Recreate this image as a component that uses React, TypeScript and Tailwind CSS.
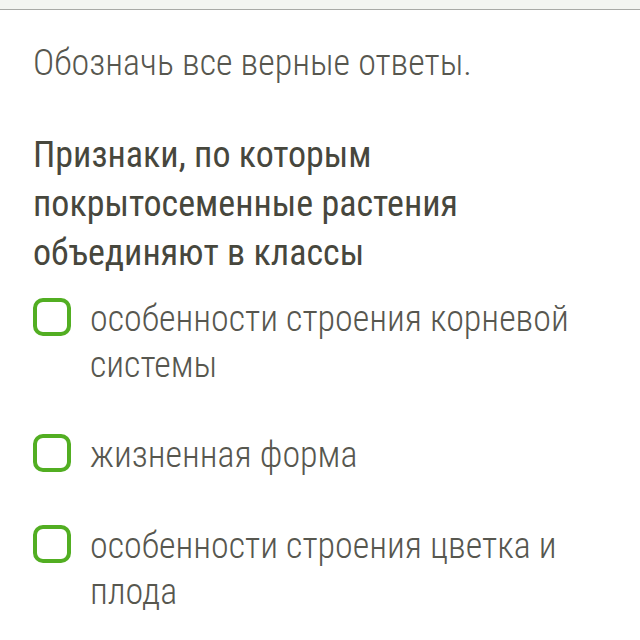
import React from "react";

const options = [
  "особенности строения корневой системы",
  "жизненная форма",
  "особенности строения цветка и плода",
];

export default function App() {
  return (
    <div
      className="w-[640px] h-[640px] bg-white overflow-hidden"
      style={{ fontFamily: "Roboto, 'Liberation Sans', sans-serif", fontStretch: "condensed" }}
    >
      <div className="h-[10px] bg-[#f3f5f1] border-b border-[#a8aaa6]" />
      <div className="pl-[33px] pr-[30px] pt-[30px]">
        <p className="text-[36px] leading-[46px] font-light text-[#57574f]">
          Обозначь все верные ответы.
        </p>
        <h2 className="mt-[45px] text-[36px] leading-[49px] font-normal text-[#47473d]">
          Признаки, по которым покрытосеменные растения объединяют в классы
        </h2>
        <div className="flex flex-col">
          {options.map((o, i) => (
            <div key={i} className={`flex items-start ${i === 0 ? "mt-[18px]" : i === 1 ? "mt-[44px]" : "mt-[45px]"}`}>
              <div className="mt-[2px] w-[38px] h-[38px] shrink-0 rounded-[10px] border-[4px] border-[#52ae22]" />
              <span className="ml-[19px] text-[36px] leading-[46px] font-light text-[#57574f]">
                {o}
              </span>
            </div>
          ))}
        </div>
      </div>
    </div>
  );
}
